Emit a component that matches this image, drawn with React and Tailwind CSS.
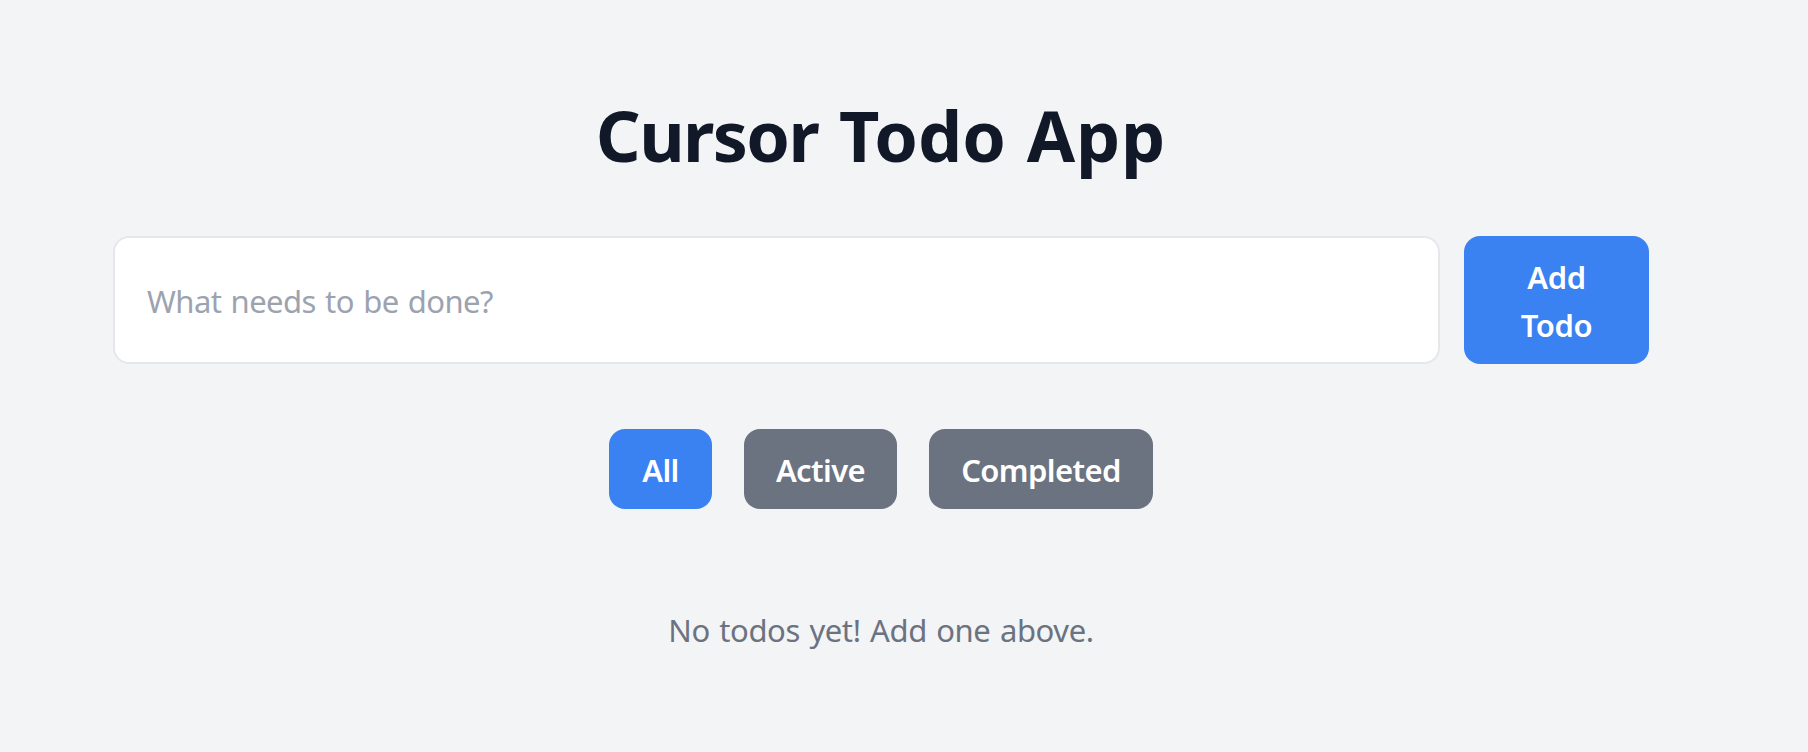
export default function App() {
  return (
    <main className="h-[752px] overflow-hidden bg-gray-100 pt-24 pl-[113px] font-['Noto_Sans',sans-serif] text-[#111827]">
      <div className="w-[1536px]">
        <h1 className="h-[84px] text-center text-[70px] leading-[78px] font-bold [word-spacing:2.5px]">
          <span className="tracking-[-1.6px]">Cursor</span> <span>Todo</span> <span className="tracking-[0.8px]">App</span>
        </h1>
        <form className="mt-14 flex gap-6" onSubmit={(e) => e.preventDefault()}>
          <input className="h-32 min-w-0 flex-1 rounded-2xl border-2 border-[#e5e7eb] bg-white px-8 pt-0.5 text-[31px] tracking-[-0.55px] [word-spacing:1.7px] placeholder:text-[#9ca3af]" placeholder="What needs to be done?" />
          <button className="h-32 w-[185px] rounded-2xl bg-[#3a81f1] px-12 pt-0.5 text-[31px] leading-[48px] font-semibold tracking-[-0.4px] text-white">Add Todo</button>
        </form>
        <div className="mt-[65px] flex justify-center gap-8 text-[31px] leading-[48px] font-semibold tracking-[-0.6px] text-white">
          <button className="h-20 w-[103px] rounded-2xl bg-[#3a81f1] pt-px">All</button>
          <button className="h-20 w-[153px] rounded-2xl bg-[#6b7280] pt-px">Active</button>
          <button className="h-20 w-[224px] rounded-2xl bg-[#6b7280] pt-px">Completed</button>
        </div>
        <p className="mt-[97px] text-center text-[31px] leading-[48px] tracking-[-0.4px] text-[#6b7280] [word-spacing:1.8px]">No todos yet! Add one above.</p>
      </div>
    </main>
  );
}
